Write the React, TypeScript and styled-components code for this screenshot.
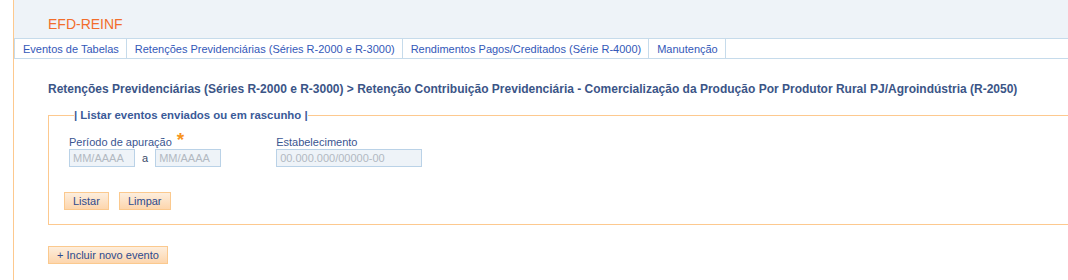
import styled, { createGlobalStyle } from 'styled-components'

const GlobalStyle = createGlobalStyle`
  body {
    margin: 0;
    font-family: 'Liberation Sans', Arial, sans-serif;
    font-size: 11px;
    background: #fff;
  }
`

const Page = styled.div`
  margin-left: 13px;
  border-left: 1px solid #fdc98f;
  min-height: 280px;
  overflow: hidden;
`

const Header = styled.div`
  height: 38px;
  background: #eef3f8;
  padding-left: 34px;
  display: flex;
  align-items: flex-end;
  box-sizing: border-box;
  padding-bottom: 6px;
`

const Brand = styled.span`
  font-size: 14px;
  color: #f26d2c;
`

const TabBar = styled.ul`
  display: flex;
  margin: 0;
  padding: 0;
  list-style: none;
  height: 21px;
  box-sizing: border-box;
  border-top: 1px solid #c6dbeb;
  border-bottom: 1px solid #c6dbeb;
`

const Tab = styled.li<{ $first?: boolean }>`
  display: flex;
  align-items: center;
  padding: 0 7px 0 8px;
  border-right: 1px solid #c6dbeb;
  border-left: ${(p) => (p.$first ? '1px solid #c6dbeb' : 'none')};
  color: #3358b8;
  font-size: 11px;
  cursor: pointer;
`

const Content = styled.div`
  padding: 22px 0 0 34px;
`

const Title = styled.h1`
  margin: 0;
  font-size: 12px;
  font-weight: bold;
  color: #3b5587;
  line-height: 16px;
`

const Fieldset = styled.fieldset`
  margin: 12px 0 0 0;
  padding: 14px 0 14px 15px;
  border: 1px solid #fdc98f;
  border-right: none;
`

const Legend = styled.legend`
  margin-left: 10px;
  padding: 0;
  font-size: 11.4px;
  font-weight: bold;
  color: #3a5a98;
`

const Fields = styled.div`
  display: flex;
  gap: 55px;
  padding-left: 5px;
`

const Field = styled.div`
  display: flex;
  flex-direction: column;
`

const Label = styled.label`
  display: flex;
  align-items: flex-start;
  color: #3a5591;
  font-size: 11px;
  line-height: 14px;
  height: 14px;
`

const Star = styled.span`
  display: inline-block;
  height: 14px;
  color: #f7941d;
  font-size: 19px;
  font-weight: bold;
  margin-left: 5px;
  line-height: 16px;
  margin-top: -3px;
`

const InputRow = styled.div`
  display: flex;
  align-items: center;
  gap: 7px;
`

const Input = styled.input<{ $w: number }>`
  width: ${(p) => p.$w}px;
  height: 18px;
  box-sizing: border-box;
  border: 1px solid #bad2e7;
  background: #eef3f8;
  font-family: 'Liberation Sans', Arial, sans-serif;
  font-size: 11px;
  padding: 0 3px;
  margin: 0;
  &::placeholder {
    color: #b2b9c2;
  }
`

const Sep = styled.span`
  color: #3a4a6a;
  font-size: 11px;
`

const Buttons = styled.div`
  display: flex;
  gap: 10px;
  margin-top: 25px;
`

const Button = styled.button`
  height: 18px;
  padding: 0 8px;
  border: 1px solid #fbc98e;
  background: linear-gradient(#fdeedd, #fdd6ad);
  color: #2e4b8e;
  font-family: 'Liberation Sans', Arial, sans-serif;
  font-size: 11px;
  cursor: pointer;
  line-height: 16px;
`

const AddRow = styled.div`
  margin-top: 21px;
`

export default function App() {
  return (
    <>
      <GlobalStyle />
      <Page>
        <Header>
          <Brand>EFD-REINF</Brand>
        </Header>
        <TabBar>
          <Tab $first>Eventos de Tabelas</Tab>
          <Tab>Retenções Previdenciárias (Séries R-2000 e R-3000)</Tab>
          <Tab>Rendimentos Pagos/Creditados (Série R-4000)</Tab>
          <Tab>Manutenção</Tab>
        </TabBar>
        <Content>
          <Title>
            Retenções Previdenciárias (Séries R-2000 e R-3000) &gt; Retenção Contribuição Previdenciária -
            Comercialização da Produção Por Produtor Rural PJ/Agroindústria (R-2050)
          </Title>
          <Fieldset>
            <Legend>| Listar eventos enviados ou em rascunho |</Legend>
            <Fields>
              <Field>
                <Label>
                  Período de apuração<Star>*</Star>
                </Label>
                <InputRow>
                  <Input $w={66} placeholder="MM/AAAA" />
                  <Sep>a</Sep>
                  <Input $w={66} placeholder="MM/AAAA" />
                </InputRow>
              </Field>
              <Field>
                <Label>Estabelecimento</Label>
                <Input $w={146} placeholder="00.000.000/00000-00" />
              </Field>
            </Fields>
            <Buttons>
              <Button>Listar</Button>
              <Button>Limpar</Button>
            </Buttons>
          </Fieldset>
          <AddRow>
            <Button>+ Incluir novo evento</Button>
          </AddRow>
        </Content>
      </Page>
    </>
  )
}
